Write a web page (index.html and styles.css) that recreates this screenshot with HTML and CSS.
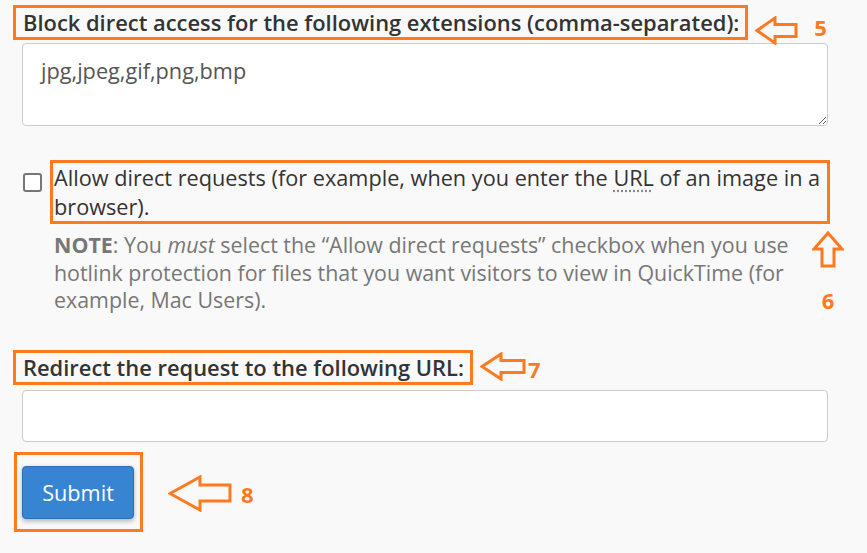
FILE: index.html
```html
<!DOCTYPE html>
<html lang="en">
<head>
<meta charset="utf-8">
<title>Hotlink protection</title>
<link rel="stylesheet" href="styles.css">
</head>
<body>
<div class="page">
  <div class="ann-row row-ext">
    <label class="mark mark-label" for="ext">Block direct access for the following extensions (comma-separated):</label>
    <svg class="arrow arrow-5" width="44" height="29" viewBox="0 0 44 29"><polygon points="2,14.5 20,2 20,8.5 41,8.5 41,20.5 20,20.5 20,27" /></svg>
    <span class="num num-5">5</span>
  </div>
  <textarea id="ext" class="field ta">jpg,jpeg,gif,png,bmp</textarea>

  <div class="check-row">
    <input type="checkbox" class="cb" id="allow">
    <div class="check-body">
      <label class="mark mark-allow" for="allow">Allow direct requests (for example, when you enter the <abbr title="Uniform Resource Locator">URL</abbr> of an image in a browser).</label>
      <div class="note-row">
        <p class="note"><strong>NOTE</strong>: You <em>must</em> select the “Allow direct requests” checkbox when you use hotlink protection for files that you want visitors to view in QuickTime (for example, Mac Users).</p>
        <div class="ann-col">
          <svg class="arrow arrow-6" width="32" height="37" viewBox="0 0 32 37"><polygon points="16,2 30,18 22,18 22,35 10,35 10,18 2,18" /></svg>
          <span class="num num-6">6</span>
        </div>
      </div>
    </div>
  </div>

  <div class="ann-row row-url">
    <label class="mark mark-label mark-url" for="url">Redirect the request to the following URL:</label>
    <svg class="arrow arrow-7" width="47" height="29" viewBox="0 0 47 29"><polygon points="2,14.5 21,2 21,8.5 44,8.5 44,20.5 21,20.5 21,27" /></svg>
    <span class="num num-7">7</span>
  </div>
  <input id="url" type="text" class="field inp">

  <div class="ann-row row-submit">
    <div class="mark mark-btn"><button class="btn" type="button">Submit</button></div>
    <svg class="arrow arrow-8" width="65" height="37" viewBox="0 0 65 37"><polygon points="2,18.5 32,2 32,10 62,10 62,26 32,26 32,35" /></svg>
    <span class="num num-8">8</span>
  </div>
</div>
</body>
</html>
```

FILE: styles.css
```css
* { box-sizing: border-box; }
html, body { margin: 0; padding: 0; }
body {
  background: #f9f9f9;
  font-family: "Open Sans", "Noto Sans", sans-serif;
  color: #333;
  font-size: 21.7px;
  width: 867px;
  height: 553px;
  overflow: hidden;
}
.page { padding: 5px 0 0 13px; }

.ann-row { display: flex; align-items: flex-start; }
.row-ext, .row-url { height: 35px; }
.row-submit { height: 80px; }

.mark { border: 3px solid #ff7a1f; }
.mark-label {
  display: block;
  flex: none;
  font-weight: 600;
  font-size: 21.9px;
  line-height: 29px;
  padding: 0 6px 0 7px;
  color: #333;
}

.arrow { display: block; flex: none; }
.arrow polygon { fill: none; stroke: #ff7a1f; stroke-width: 3; stroke-linejoin: miter; }

.num {
  color: #ff7a1f;
  font-weight: 700;
  font-size: 22px;
  line-height: 22px;
  flex: none;
}
.arrow-5 { margin: 11px 0 0 7px; }
.num-5 { margin: 11px 0 0 15px; }

.field {
  display: block;
  margin-left: 9px;
  width: 806px;
  border: 1px solid #ccc;
  border-radius: 4px;
  background: #fff;
  font-family: inherit;
  font-size: 21.7px;
  color: #555;
}
.ta {
  margin-top: 3px;
  height: 83px;
  padding: 12px 18px;
  line-height: 29px;
  resize: vertical;
}

.check-row { display: flex; align-items: flex-start; margin-top: 34px; }
.cb {
  appearance: none;
  -webkit-appearance: none;
  flex: none;
  width: 19px;
  height: 19px;
  margin: 13px 0 0 10px;
  border: 2px solid #767676;
  border-radius: 3px;
  background: #fff;
}
.check-body { margin-left: 8px; }
.mark-allow {
  display: block;
  width: 780px;
  padding: 0 2px 0 1px;
  line-height: 29px;
  color: #333;
}
.mark-allow abbr {
  text-decoration: underline dotted #888;
  text-underline-offset: 4px;
}

.note-row { display: flex; align-items: flex-start; }
.note {
  margin: 7px 0 0 4px;
  width: 752px;
  font-size: 21.4px;
  line-height: 27.5px;
  color: #777;
}
.note strong { font-weight: 700; }
.ann-col { display: flex; flex-direction: column; align-items: center; margin: 7px 0 0 6px; }
.num-6 { margin-top: 21px; }

.row-url { margin-top: 36px; }
.arrow-7 { margin: 2px 0 0 7px; }
.num-7 { margin: 8px 0 0 1px; }

.inp { margin-top: 5px; height: 52px; padding: 0 12px; }

.row-submit { margin: 10px 0 0 1px; }
.mark-btn { padding: 11px 6px 10px 5px; }
.btn {
  display: block;
  width: 112px;
  height: 53px;
  background: #3784d2;
  border: 1px solid #2b70b6;
  border-radius: 4px;
  color: #fff;
  font-family: inherit;
  font-size: 21.7px;
  box-shadow: 0 2px 5px rgba(0,0,0,0.3);
  padding: 0;
}
.arrow-8 { margin: 23px 0 0 25px; }
.num-8 { margin: 31px 0 0 8px; }
```
